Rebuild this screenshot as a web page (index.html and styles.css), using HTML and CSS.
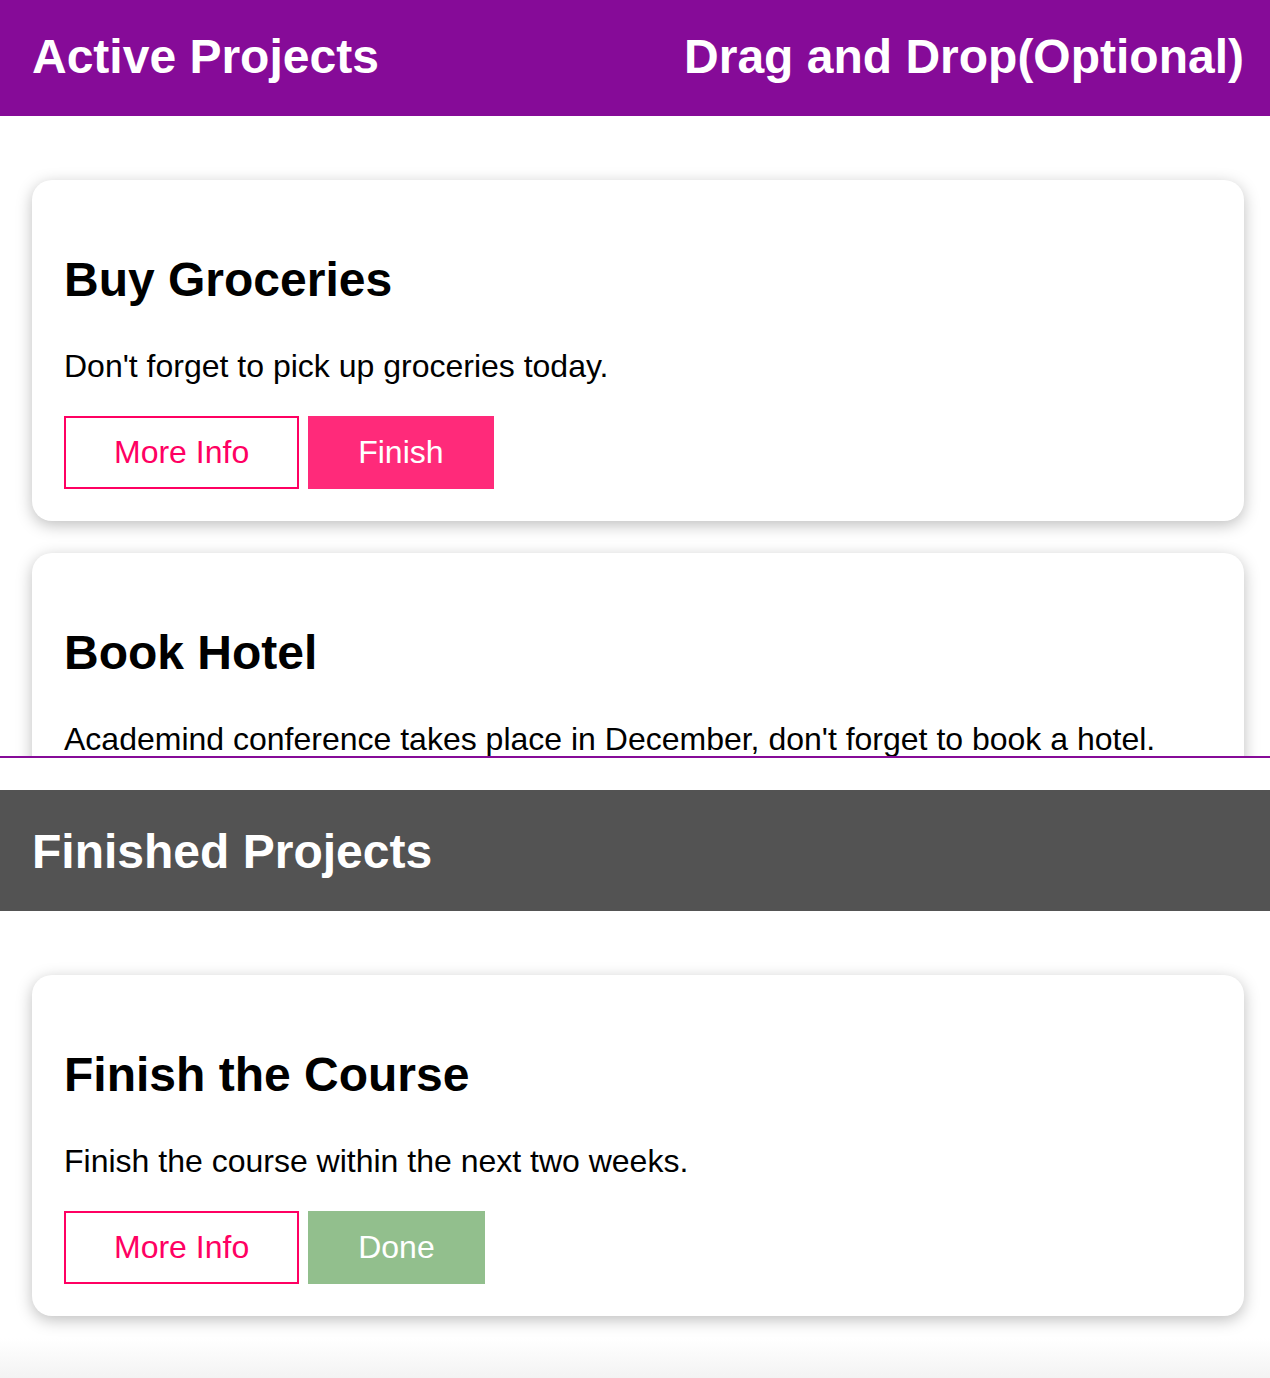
FILE: index.html
```html
<!DOCTYPE html>
<html lang="en">
<head>
<meta charset="utf-8">
<meta name="viewport" content="width=device-width, initial-scale=1">
<title>Projects</title>
<link rel="stylesheet" href="styles.css">
</head>
<body>
<main>
  <section class="projects projects-active">
    <header class="bar">
      <h2>Active Projects</h2>
      <h2>Drag and Drop(Optional)</h2>
    </header>
    <ul class="list">
      <li class="card">
        <h2>Buy Groceries</h2>
        <p>Don't forget to pick up groceries today.</p>
        <div class="actions">
          <button type="button" class="btn btn-outline">More Info</button>
          <button type="button" class="btn btn-finish">Finish</button>
        </div>
      </li>
      <li class="card">
        <h2>Book Hotel</h2>
        <p>Academind conference takes place in December, don't forget to book a hotel.</p>
      </li>
    </ul>
  </section>
  <section class="projects projects-finished">
    <header class="bar">
      <h2>Finished Projects</h2>
    </header>
    <ul class="list">
      <li class="card">
        <h2>Finish the Course</h2>
        <p>Finish the course within the next two weeks.</p>
        <div class="actions">
          <button type="button" class="btn btn-outline">More Info</button>
          <button type="button" class="btn btn-done">Done</button>
        </div>
      </li>
    </ul>
  </section>
</main>
</body>
</html>
```
FILE: styles.css
```css
* {
  box-sizing: border-box;
}

body {
  margin: 0;
  font-family: "Liberation Sans", Arial, sans-serif;
  font-size: 32px;
  line-height: 36px;
  color: #000;
  background: #fff;
}

h2 {
  margin: 0;
  font-size: 48px;
  line-height: 56px;
}

p {
  margin: 0;
}

.bar {
  display: flex;
  justify-content: space-between;
  padding: 29px 26px 31px 32px;
  color: #fff;
}

.projects-active {
  border-bottom: 2px solid #860b98;
  margin-bottom: 32px;
}

.projects-active .bar {
  background: #860b98;
}

.projects-finished .bar {
  padding-top: 34px;
  background: #535353;
}

.list {
  display: flex;
  flex-direction: column;
  gap: 32px;
  margin: 0;
  padding: 64px 26px 62px 32px;
  list-style: none;
}

.projects-active .list {
  max-height: 640px;
  overflow: hidden;
}

.projects-finished .list {
  background: linear-gradient(to top, #f3f3f3, #fff 40px);
}

.card {
  padding: 72px 32px 32px;
  border-radius: 20px;
  background: #fff;
  box-shadow: 0 4px 16px rgba(0, 0, 0, 0.26);
}

.card p {
  margin-top: 40px;
}

.actions {
  display: flex;
  gap: 9px;
  margin-top: 32px;
}

.btn {
  padding: 16px 48px;
  border: 2px solid #ff0062;
  font: inherit;
  line-height: 37px;
  background: #fff;
}

.btn-outline {
  color: #ff0062;
}

.btn-finish {
  border-color: #ff2a7a;
  background: #ff2a7a;
  color: #fff;
}

.btn-done {
  border-color: #92bf8d;
  background: #92bf8d;
  color: #fff;
}
```
